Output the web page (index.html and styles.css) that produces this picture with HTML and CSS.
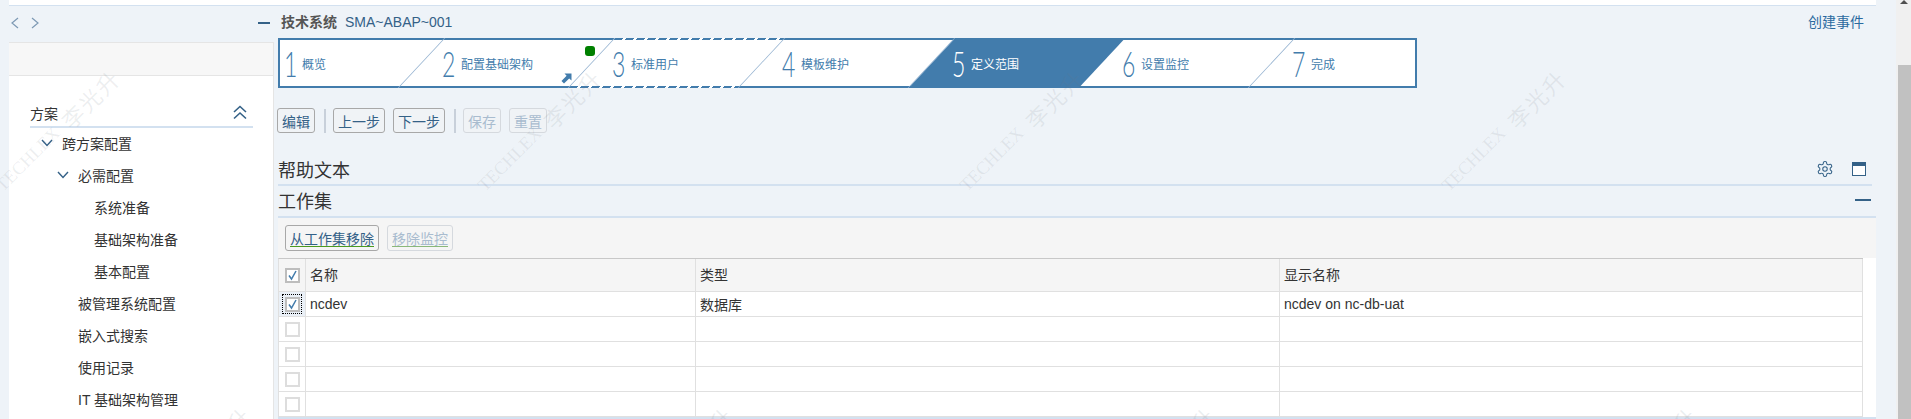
FILE: index.html
```html
<!DOCTYPE html>
<html lang="zh">
<head>
    <meta charset="UTF-8">
    <meta name="viewport" content="width=device-width, initial-scale=1.0">
    <title>技术系统 SMA~ABAP~001</title>
    <link rel="stylesheet" href="styles.css">
</head>
<body>

    <div class="page">
        <div class="shell">
            <div class="top-strip"></div>
            <div class="columns">

                <div class="side">
                    <div class="side-nav">
                        <svg class="nav-arrows" width="32" height="14" viewBox="0 0 32 14">
                            <path d="M9 2 L3 7 L9 12"/>
                            <path d="M23 2 L29 7 L23 12"/>
                        </svg>
                        <span class="minus"></span>
                    </div>
                    <div class="side-panel">
                        <div class="side-header"></div>
                        <div class="side-title">
                            <span>方案</span>
                            <svg class="double-up" width="16" height="15" viewBox="0 0 16 15">
                                <path d="M2 7 L8 1.5 L14 7"/>
                                <path d="M2 13.5 L8 8 L14 13.5"/>
                            </svg>
                        </div>
                        <div class="tree">
                            <div class="tree-row lvl-1"><svg class="tree-chev" width="12" height="8" viewBox="0 0 12 8"><path d="M1 1 L6 6.5 L11 1"/></svg>跨方案配置</div>
                            <div class="tree-row lvl-2"><svg class="tree-chev" width="12" height="8" viewBox="0 0 12 8"><path d="M1 1 L6 6.5 L11 1"/></svg>必需配置</div>
                            <div class="tree-row lvl-3">系统准备</div>
                            <div class="tree-row lvl-3">基础架构准备</div>
                            <div class="tree-row lvl-3">基本配置</div>
                            <div class="tree-row lvl-2-leaf">被管理系统配置</div>
                            <div class="tree-row lvl-2-leaf">嵌入式搜索</div>
                            <div class="tree-row lvl-2-leaf">使用记录</div>
                            <div class="tree-row lvl-2-leaf">IT 基础架构管理</div>
                        </div>
                    </div>
                </div>

                <div class="main">
                    <div class="main-head">
                        <div><span class="sys-label">技术系统</span><span class="sys-name">SMA~ABAP~001</span></div>
                        <a class="create-link">创建事件</a>
                    </div>

                    <div class="steps">
                        <div class="step step-first"><span class="num">1</span><span class="step-label">概览</span></div>
                        <div class="step">
                            <span class="num">2</span><span class="step-label">配置基础架构</span>
                            <span class="green-dot"></span>
                            <svg class="step-arrow" width="11" height="11" viewBox="0 0 11 11"><path d="M3.5 0.5 H10.5 V7.5 L8.2 5.4 L3 10.5 L0.5 8 L5.6 2.8 Z"/></svg>
                        </div>
                        <div class="step step-dashed"><span class="num">3</span><span class="step-label">标准用户</span></div>
                        <div class="step"><span class="num">4</span><span class="step-label">模板维护</span></div>
                        <div class="step step-active"><span class="num">5</span><span class="step-label">定义范围</span></div>
                        <div class="step"><span class="num">6</span><span class="step-label">设置监控</span></div>
                        <div class="step step-last"><span class="num">7</span><span class="step-label">完成</span></div>
                    </div>

                    <div class="toolbar">
                        <button class="btn">编辑</button>
                        <span class="sep"></span>
                        <button class="btn">上一步</button>
                        <button class="btn">下一步</button>
                        <span class="sep"></span>
                        <button class="btn btn-off">保存</button>
                        <button class="btn btn-off">重置</button>
                    </div>

                    <div class="section-head section-help">
                        <h2>帮助文本</h2>
                        <div class="section-icons">
                            <svg class="gear" width="18" height="18" viewBox="0 0 24 24">
                                <path d="M12.22 2h-.44a2 2 0 0 0-2 2v.18a2 2 0 0 1-1 1.73l-.43.25a2 2 0 0 1-2 0l-.15-.08a2 2 0 0 0-2.73.73l-.22.38a2 2 0 0 0 .73 2.73l.15.1a2 2 0 0 1 1 1.72v.51a2 2 0 0 1-1 1.74l-.15.09a2 2 0 0 0-.73 2.73l.22.38a2 2 0 0 0 2.73.73l.15-.08a2 2 0 0 1 2 0l.43.25a2 2 0 0 1 1 1.73V20a2 2 0 0 0 2 2h.44a2 2 0 0 0 2-2v-.18a2 2 0 0 1 1-1.73l.43-.25a2 2 0 0 1 2 0l.15.08a2 2 0 0 0 2.73-.73l.22-.39a2 2 0 0 0-.73-2.73l-.15-.08a2 2 0 0 1-1-1.74v-.5a2 2 0 0 1 1-1.74l.15-.09a2 2 0 0 0 .73-2.73l-.22-.38a2 2 0 0 0-2.73-.73l-.15.08a2 2 0 0 1-2 0l-.43-.25a2 2 0 0 1-1-1.73V4a2 2 0 0 0-2-2z"/>
                                <circle cx="12" cy="12" r="3"/>
                            </svg>
                            <span class="window-icon"></span>
                        </div>
                    </div>

                    <div class="section-head section-work">
                        <h2>工作集</h2>
                        <span class="minus minus-wide"></span>
                    </div>

                    <div class="work-toolbar">
                        <button class="btn btn-under">从工作集移除</button>
                        <button class="btn btn-under btn-off">移除监控</button>
                    </div>

                    <div class="table-wrap">
                        <table class="grid">
                            <colgroup>
                                <col class="col-sel">
                                <col class="col-name">
                                <col class="col-type">
                                <col class="col-show">
                            </colgroup>
                            <thead>
                                <tr>
                                    <th class="sel"><span class="check check-on"><svg width="11" height="11" viewBox="0 0 11 11"><path d="M2 5.5 L4.5 9 L9 1"/></svg></span></th>
                                    <th>名称</th>
                                    <th>类型</th>
                                    <th>显示名称</th>
                                </tr>
                            </thead>
                            <tbody>
                                <tr>
                                    <td class="sel sel-on"><span class="focus-box"><span class="check check-on"><svg width="11" height="11" viewBox="0 0 11 11"><path d="M2 5.5 L4.5 9 L9 1"/></svg></span></span></td>
                                    <td>ncdev</td>
                                    <td>数据库</td>
                                    <td>ncdev on nc-db-uat</td>
                                </tr>
                                <tr><td class="sel"><span class="check"></span></td><td></td><td></td><td></td></tr>
                                <tr><td class="sel"><span class="check"></span></td><td></td><td></td><td></td></tr>
                                <tr><td class="sel"><span class="check"></span></td><td></td><td></td><td></td></tr>
                                <tr><td class="sel"><span class="check"></span></td><td></td><td></td><td></td></tr>
                            </tbody>
                        </table>
                    </div>
                </div>

            </div>
        </div>

        <div class="scrollbar">
            <span class="scroll-up"></span>
            <div class="scroll-thumb"></div>
        </div>
    </div>

    <!-- watermark sits over everything -->
    <div class="watermarks">
        <div class="wm-row wm-row-a">
            <div class="wm"><span>TECHLEX</span><span class="wm-cn">李光升</span></div>
            <div class="wm"><span>TECHLEX</span><span class="wm-cn">李光升</span></div>
            <div class="wm"><span>TECHLEX</span><span class="wm-cn">李光升</span></div>
            <div class="wm"><span>TECHLEX</span><span class="wm-cn">李光升</span></div>
        </div>
        <div class="wm-row wm-row-b">
            <div class="wm"><span>TECHLEX</span><span class="wm-cn">李光升</span></div>
            <div class="wm"><span>TECHLEX</span><span class="wm-cn">李光升</span></div>
            <div class="wm"><span>TECHLEX</span><span class="wm-cn">李光升</span></div>
            <div class="wm"><span>TECHLEX</span><span class="wm-cn">李光升</span></div>
        </div>
    </div>

</body>
</html>
```

FILE: styles.css
```css
/* General reset */
* {
    margin: 0;
    padding: 0;
    box-sizing: border-box;
    font-family: "Liberation Sans", "Noto Sans CJK SC", sans-serif;
}

body {
    position: relative;
    width: 1911px;
    height: 419px;
    overflow: hidden;
    background-color: #eef3f8;
    color: #333;
    font-size: 14px;
}

.page {
    display: flex;
    height: 419px;
    padding-left: 9px;
}

.shell {
    flex: 0 0 1867px;
}

.top-strip {
    height: 6px;
    background-color: #fff;
    border-bottom: 1px solid #d3e1f0;
}

.columns {
    display: flex;
}

/* Left side */
.side {
    flex: 0 0 265px;
}

.side-nav {
    display: flex;
    align-items: center;
    justify-content: space-between;
    height: 36px;
    padding: 0 4px 2px 0;
}

.nav-arrows path {
    fill: none;
    stroke: #7d99b4;
    stroke-width: 1.2;
}

.minus {
    display: block;
    width: 12px;
    height: 2px;
    background-color: #346187;
}

.minus-wide {
    width: 16px;
}

.side-panel {
    height: 377px;
    background-color: #fff;
    border-top: 1px solid #e5e5e5;
    border-right: 1px solid #e5e5e5;
}

.side-header {
    height: 33px;
    background-color: #f7f7f7;
    border-bottom: 1px solid #e5e5e5;
}

.side-title {
    display: flex;
    justify-content: space-between;
    align-items: center;
    height: 52px;
    margin: 0 20px 0 21px;
    padding: 23px 5px 0 0;
    border-bottom: 2px solid #d3e1f0;
}

.double-up path {
    fill: none;
    stroke: #346187;
    stroke-width: 1.6;
}

.tree-row {
    display: flex;
    align-items: center;
    height: 32px;
    padding-bottom: 2px;
}

.tree-chev {
    margin-right: 9px;
}

.tree-chev path {
    fill: none;
    stroke: #346187;
    stroke-width: 1.4;
}

.lvl-1 {
    padding-left: 32px;
}

.lvl-2 {
    padding-left: 48px;
}

.lvl-2-leaf {
    padding-left: 69px;
}

.lvl-3 {
    padding-left: 85px;
}

/* Main area */
.main {
    flex: 0 0 1598px;
    margin-left: 4px;
}

.main-head {
    display: flex;
    justify-content: space-between;
    height: 32px;
    padding: 6px 12px 0 3px;
    line-height: 20px;
}

.sys-label {
    margin-right: 8px;
    font-weight: bold;
    color: #555;
}

.sys-name {
    color: #346187;
}

.create-link {
    color: #2a6a9f;
}

/* Wizard steps */
.steps {
    display: flex;
    width: 1139px;
    height: 50px;
    background-color: #fff;
    border: 2px solid #427cac;
}

.step {
    position: relative;
    display: flex;
    align-items: center;
    flex: 0 0 170px;
    padding-left: 20px;
    color: #427cac;
}

.step::before {
    content: "";
    position: absolute;
    top: -2px;
    bottom: -2px;
    left: 0;
    right: 0;
    transform: skewX(-43deg);
    border-right: 1px solid #92b0cf;
}

.step-first {
    flex-basis: 142px;
    padding-left: 4px;
}

.step-first::before {
    left: 60px;
}

.step-first .num {
    width: 18px;
}

.step-last {
    flex: 1;
}

.step-last::before {
    display: none;
}

/* white gaps cut into the blue frame above and below the step */
.step-dashed::before {
    background:
        repeating-linear-gradient(90deg, transparent 0 8px, #fff 8px 11px) top / 100% 2px no-repeat,
        repeating-linear-gradient(90deg, transparent 0 8px, #fff 8px 11px) bottom / 100% 2px no-repeat;
}

.step-active {
    color: #fff;
}

.step-active::before {
    background-color: #427cac;
    border-right: none;
}

/* digits in the reference are tall and narrow, so squeeze them */
.num {
    position: relative;
    display: block;
    width: 19px;
    font-family: "Lato", sans-serif;
    font-weight: 300;
    font-size: 36px;
    line-height: 46px;
    transform: scaleX(0.64);
    transform-origin: left center;
}

.step-label {
    position: relative;
    font-size: 12px;
}

.green-dot {
    position: absolute;
    top: 6px;
    right: -3px;
    width: 10px;
    height: 10px;
    background-color: #008000;
    border-radius: 3px;
}

.step-arrow {
    position: absolute;
    top: 33px;
    left: 139px;
    fill: #427cac;
}

/* Buttons */
.toolbar {
    display: flex;
    align-items: center;
    height: 25px;
    margin-top: 20px;
    margin-left: -1px;
}

.btn {
    height: 25px;
    padding: 0 4px;
    margin-right: 8px;
    font-size: 14px;
    color: #346187;
    background-color: #f0f3f6;
    border: 1px solid #a8a8a8;
    border-radius: 3px;
}

.btn-off {
    color: #a9bccf;
    border-color: #d5d9de;
}

.sep {
    width: 2px;
    height: 24px;
    margin: 0 7px 0 1px;
    background-color: #c8d0da;
}

/* Sections */
.section-head {
    display: flex;
    justify-content: space-between;
    align-items: center;
    padding-bottom: 2px;
    border-bottom: 2px solid #d3e1f0;
}

.section-head h2 {
    font-size: 18px;
    font-weight: normal;
    color: #333;
}

.section-help {
    height: 31px;
    margin-top: 22px;
    margin-right: 4px;
    padding-right: 6px;
}

.section-icons {
    display: flex;
    align-items: center;
    gap: 18px;
}

.gear path,
.gear circle {
    fill: none;
    stroke: #346187;
    stroke-width: 1.4;
}

.window-icon {
    display: block;
    width: 14px;
    height: 14px;
    background-color: #fff;
    border: 1px solid #346187;
    border-top-width: 4px;
}

.section-work {
    height: 32px;
    padding-right: 5px;
}

.work-toolbar {
    display: flex;
    height: 40px;
    padding: 7px 0 0 7px;
    background-color: #f5f5f5;
}

.btn-under {
    height: 26px;
    background-color: #f5f5f5;
    text-decoration: underline;
    text-decoration-color: #4a9a1f;
    text-decoration-thickness: 1px;
    text-underline-offset: 2px;
}

.btn-under.btn-off {
    text-decoration-color: #8ab87a;
}

/* Table */
.table-wrap {
    height: 161px;
    background-color: #fff;
    border-bottom: 2px solid #d3e1f0;
}

.grid {
    width: 1585px;
    table-layout: fixed;
    border-collapse: separate;
    border-spacing: 0;
    border-top: 1px solid #c8c8c8;
    border-left: 1px solid #e0e0e0;
}

.col-sel {
    width: 27px;
}

.col-name {
    width: 390px;
}

.col-type {
    width: 584px;
}

.col-show {
    width: 583px;
}

.grid th,
.grid td {
    padding: 0 4px;
    text-align: left;
    font-weight: normal;
    border-right: 1px solid #e0e0e0;
    border-bottom: 1px solid #e0e0e0;
}

.grid th {
    height: 33px;
    padding-bottom: 2px;
    background-color: #f5f5f5;
}

.grid td {
    height: 25px;
}

.grid .sel {
    padding: 0 0 0 6px;
}

.grid .sel-on {
    padding-left: 3px;
    background-color: #eaf0f7;
}

.check {
    display: flex;
    align-items: center;
    justify-content: center;
    width: 15px;
    height: 15px;
    background-color: #fff;
    border: 2px solid #ddd;
}

.check-on {
    border-color: #bdbdbd;
}

.check svg path {
    fill: none;
    stroke: #427cac;
    stroke-width: 1.5;
}

.focus-box {
    display: flex;
    align-items: center;
    justify-content: center;
    width: 20px;
    height: 20px;
    outline: 1px dotted #000;
    outline-offset: -1px;
}

/* Scrollbar */
.scrollbar {
    position: relative;
    flex: 0 0 15px;
    margin-left: 20px;
    background-color: #f0f0f0;
}

.scroll-up {
    position: absolute;
    top: 0;
    left: 4px;
    border-left: 4px solid transparent;
    border-right: 4px solid transparent;
    border-bottom: 4px solid #505050;
}

.scroll-thumb {
    height: 354px;
    margin: 65px 0 0 2px;
    background-color: #c1c1c1;
}

/* Watermark */
.watermarks {
    position: absolute;
    top: -38px;
    left: 0;
    width: 1911px;
    height: 457px;
    overflow: hidden;
    pointer-events: none;
}

.wm-row {
    display: flex;
    height: 337px;
}

.wm-row-a {
    margin-left: -184px;
}

.wm-row-b {
    margin-left: -53px;
}

.wm {
    flex: 0 0 482px;
    display: flex;
    align-items: center;
    justify-content: center;
    gap: 10px;
    transform: rotate(-45deg);
    font-size: 18px;
    white-space: nowrap;
    color: rgba(110, 120, 130, 0.12);
}

.wm span {
    font-family: "Liberation Serif", "Noto Sans CJK SC", serif;
}

.wm .wm-cn {
    font-size: 22px;
    letter-spacing: 2px;
}
```
